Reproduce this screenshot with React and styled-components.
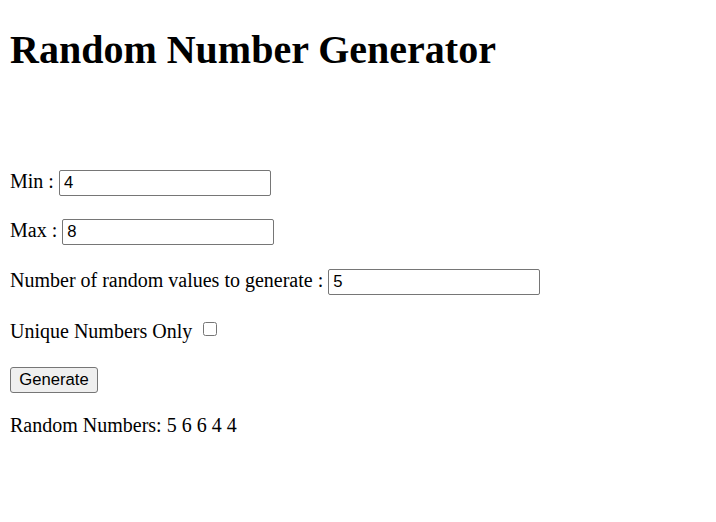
import React, { useState } from "react";
import styled, { createGlobalStyle } from "styled-components";

const GlobalStyle = createGlobalStyle`
  html, body {
    margin: 0;
    padding: 0;
    background: #ffffff;
  }
  body {
    font-family: "Liberation Serif", "Times New Roman", serif;
    font-size: 20px;
    color: #000000;
  }
`;

const Page = styled.div`
  padding: 26px 10px 0;
`;

const Title = styled.h1`
  margin: 0;
  font-family: "Liberation Serif", "Times New Roman", serif;
  font-size: 40px;
  font-weight: bold;
  line-height: normal;
`;

const Form = styled.div`
  display: flex;
  flex-direction: column;
  align-items: flex-start;
  margin-top: 96.7px;
`;

const Row = styled.div`
  display: flex;
  align-items: ${(p) => p.$align || "baseline"};
  margin-top: ${(p) => p.$mt || 0}px;
  line-height: normal;
  white-space: pre;
`;

const Label = styled.span`
  font-size: 20px;
`;

const TextInput = styled.input`
  box-sizing: border-box;
  width: 212px;
  height: 26px;
  margin: 0 0 0 5px;
  padding: 1px 4px;
  border: 1px solid #767676;
  border-radius: 2px;
  font-family: "Liberation Sans", Arial, sans-serif;
  font-size: 16.67px;
  color: #000000;
  background: #ffffff;
  outline: none;
`;

const Checkbox = styled.input`
  appearance: none;
  box-sizing: border-box;
  width: 14px;
  height: 14px;
  margin: 2px 0 0 10.5px;
  border: 1px solid #767676;
  border-radius: 2.5px;
  background: #ffffff;
  &:checked {
    background: #0075ff;
    border-color: #0075ff;
  }
`;

const Button = styled.button`
  box-sizing: border-box;
  width: 88px;
  height: 26px;
  padding: 1px 7px;
  border: 1px solid #767676;
  border-radius: 3px;
  background: #efefef;
  font-family: "Liberation Sans", Arial, sans-serif;
  font-size: 16.67px;
  color: #000000;
  cursor: default;
`;

const Result = styled.div`
  font-size: 20px;
  line-height: normal;
`;

export default function App() {
  const [min, setMin] = useState("4");
  const [max, setMax] = useState("8");
  const [count, setCount] = useState("5");
  const [unique, setUnique] = useState(false);
  const [numbers, setNumbers] = useState([5, 6, 6, 4, 4]);

  const generate = () => {
    const lo = parseInt(min, 10);
    const hi = parseInt(max, 10);
    const n = parseInt(count, 10);
    if (isNaN(lo) || isNaN(hi) || isNaN(n)) return;
    const out = [];
    const pool = [];
    for (let i = lo; i <= hi; i++) pool.push(i);
    for (let i = 0; i < n; i++) {
      if (unique) {
        if (!pool.length) break;
        const idx = Math.floor(Math.random() * pool.length);
        out.push(pool.splice(idx, 1)[0]);
      } else {
        out.push(lo + Math.floor(Math.random() * (hi - lo + 1)));
      }
    }
    setNumbers(out);
  };

  return (
    <>
      <GlobalStyle />
      <Page>
        <Title>Random Number Generator</Title>
        <Form>
          <Row>
            <Label>Min :</Label>
            <TextInput value={min} onChange={(e) => setMin(e.target.value)} />
          </Row>
          <Row $mt={23.5}>
            <Label>Max :</Label>
            <TextInput value={max} onChange={(e) => setMax(e.target.value)} />
          </Row>
          <Row $mt={23.5}>
            <Label>Number of random values to generate :</Label>
            <TextInput value={count} onChange={(e) => setCount(e.target.value)} />
          </Row>
          <Row $mt={25.5} $align="flex-start">
            <Label>Unique Numbers Only</Label>
            <Checkbox
              type="checkbox"
              checked={unique}
              onChange={(e) => setUnique(e.target.checked)}
            />
          </Row>
          <Row $mt={23.4}>
            <Button onClick={generate}>Generate</Button>
          </Row>
          <Row $mt={21.3}>
            <Result>Random Numbers: {numbers.join(" ")}</Result>
          </Row>
        </Form>
      </Page>
    </>
  );
}
